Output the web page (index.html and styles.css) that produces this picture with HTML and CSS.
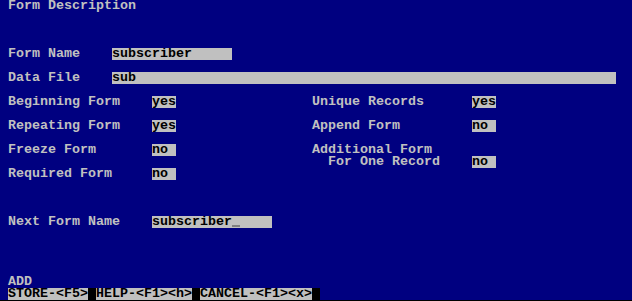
FILE: index.html
```html
<!DOCTYPE html>
<html lang="en">
<head>
  <meta charset="UTF-8">
  <meta name="viewport" content="width=device-width, initial-scale=1.0">
  <title>Form Description</title>
  <link rel="stylesheet" href="styles.css">
</head>
<body>
  <div class="screen">
<div class="row"> Form Description</div>
<div class="row"></div>
<div class="row"></div>
<div class="row"></div>
<div class="row"> Form Name    <span class="field">subscriber     </span></div>
<div class="row"></div>
<div class="row"> Data File    <span class="field">sub                                                            </span></div>
<div class="row"></div>
<div class="row"> Beginning Form    <span class="field">yes</span>                 Unique Records      <span class="field">yes</span></div>
<div class="row"></div>
<div class="row"> Repeating Form    <span class="field">yes</span>                 Append Form         <span class="field">no </span></div>
<div class="row"></div>
<div class="row"> Freeze Form       <span class="field">no </span>                 Additional Form</div>
<div class="row">                                         For One Record    <span class="field">no </span></div>
<div class="row"> Required Form     <span class="field">no </span></div>
<div class="row"></div>
<div class="row"></div>
<div class="row"></div>
<div class="row"> Next Form Name    <span class="field">subscriber<span class="cursor"> </span>    </span></div>
<div class="row"></div>
<div class="row"></div>
<div class="row"></div>
<div class="row"></div>
<div class="row"> ADD</div>
<div class="row"> <span class="key">STORE-&lt;F5&gt;</span><span class="gap"> </span><span class="key">HELP-&lt;F1&gt;&lt;h&gt;</span><span class="gap"> </span><span class="key">CANCEL-&lt;F1&gt;&lt;x&gt;</span><span class="gap"> </span></div>
  </div>
</body>
</html>
```

FILE: styles.css
```css
html, body {
  margin: 0;
  padding: 0;
  background: #000;
}
.screen {
  width: 632px;
  height: 300px;
  overflow: hidden;
  background: #000080;
  color: #c0c0c0;
  font-family: "Liberation Mono", "DejaVu Sans Mono", monospace;
  font-size: 13.333px;
  font-weight: bold;
}
.row {
  height: 12px;
  line-height: 12px;
  white-space: pre;
}
.field, .key, .gap, .cursor {
  display: inline-block;
  height: 12px;
  line-height: 12px;
  vertical-align: top;
}
.field, .key {
  background: #c0c0c0;
  color: #000;
}
.gap {
  background: #000;
}
.cursor {
  width: 8px;
  background: linear-gradient(to top, #c0c0c0 1px, #808080 1px, #808080 3px, #c0c0c0 3px);
}
```
